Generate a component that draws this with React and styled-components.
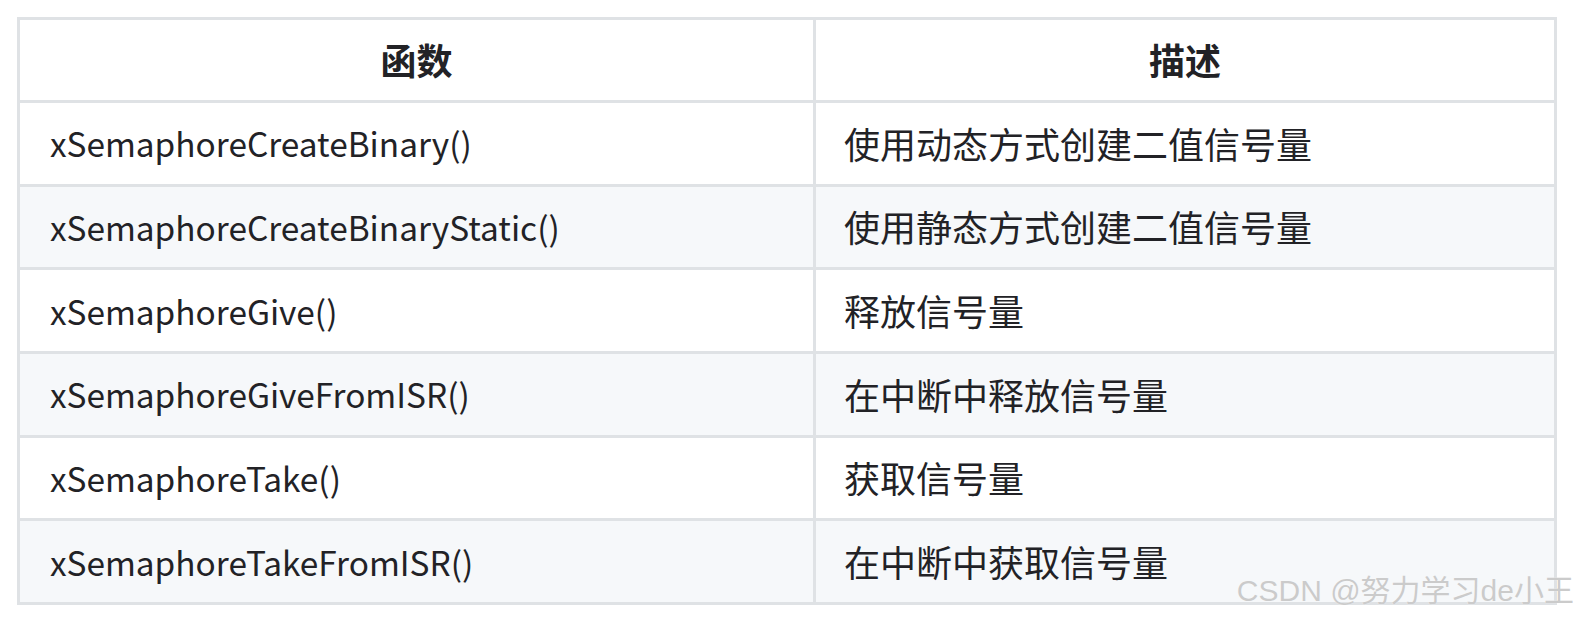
import React from "react";
import styled, { createGlobalStyle } from "styled-components";

const Global = createGlobalStyle`
  html, body { margin: 0; padding: 0; background: #ffffff; overflow: hidden; }
  body { font-family: "Noto Sans CJK SC", "Noto Sans", sans-serif; }
`;

const Page = styled.div`
  position: relative;
  width: 1573px;
  height: 619px;
  padding: 17px 0 0 17px;
  box-sizing: border-box;
  background: #ffffff;
  overflow: hidden;
`;

const Table = styled.div`
  display: grid;
  grid-template-columns: 793px 738px;
  grid-template-rows: 80px repeat(6, 80.67px);
  gap: 3px;
  padding: 3px;
  width: max-content;
  background: #dfe2e5;
`;

const Cell = styled.div`
  display: flex;
  align-items: center;
  justify-content: ${(p) => (p.$head ? "center" : "flex-start")};
  padding: 0 28px 0 ${(p) => (p.$code ? "30px" : "28px")};
  background: ${(p) => (p.$alt ? "#f6f8fa" : "#ffffff")};
  color: #222226;
  font-family: "Noto Sans CJK SC", "Noto Sans", sans-serif;
  font-size: ${(p) => (p.$code ? "33.4px" : "36px")};
  font-weight: ${(p) => (p.$head ? 700 : 400)};
  line-height: 1.2;
  white-space: nowrap;
`;

const Watermark = styled.div`
  position: absolute;
  right: -1px;
  top: 573px;
  font-family: "Liberation Sans", "Noto Sans CJK SC", sans-serif;
  font-size: 30px;
  line-height: 36px;
  color: #cbcbcb;
  text-shadow: 0 0 1px #ffffff;
  white-space: nowrap;
  pointer-events: none;
`;

const rows = [
  ["xSemaphoreCreateBinary()", "使用动态方式创建二值信号量"],
  ["xSemaphoreCreateBinaryStatic()", "使用静态方式创建二值信号量"],
  ["xSemaphoreGive()", "释放信号量"],
  ["xSemaphoreGiveFromISR()", "在中断中释放信号量"],
  ["xSemaphoreTake()", "获取信号量"],
  ["xSemaphoreTakeFromISR()", "在中断中获取信号量"],
];

export default function App() {
  return (
    <>
      <Global />
      <Page>
        <Table>
          <Cell $head>函数</Cell>
          <Cell $head>描述</Cell>
          {rows.map(([fn, desc], i) => (
            <React.Fragment key={fn}>
              <Cell $code $alt={i % 2 === 1}>{fn}</Cell>
              <Cell $alt={i % 2 === 1}>{desc}</Cell>
            </React.Fragment>
          ))}
        </Table>
        <Watermark>CSDN @努力学习de小王</Watermark>
      </Page>
    </>
  );
}
